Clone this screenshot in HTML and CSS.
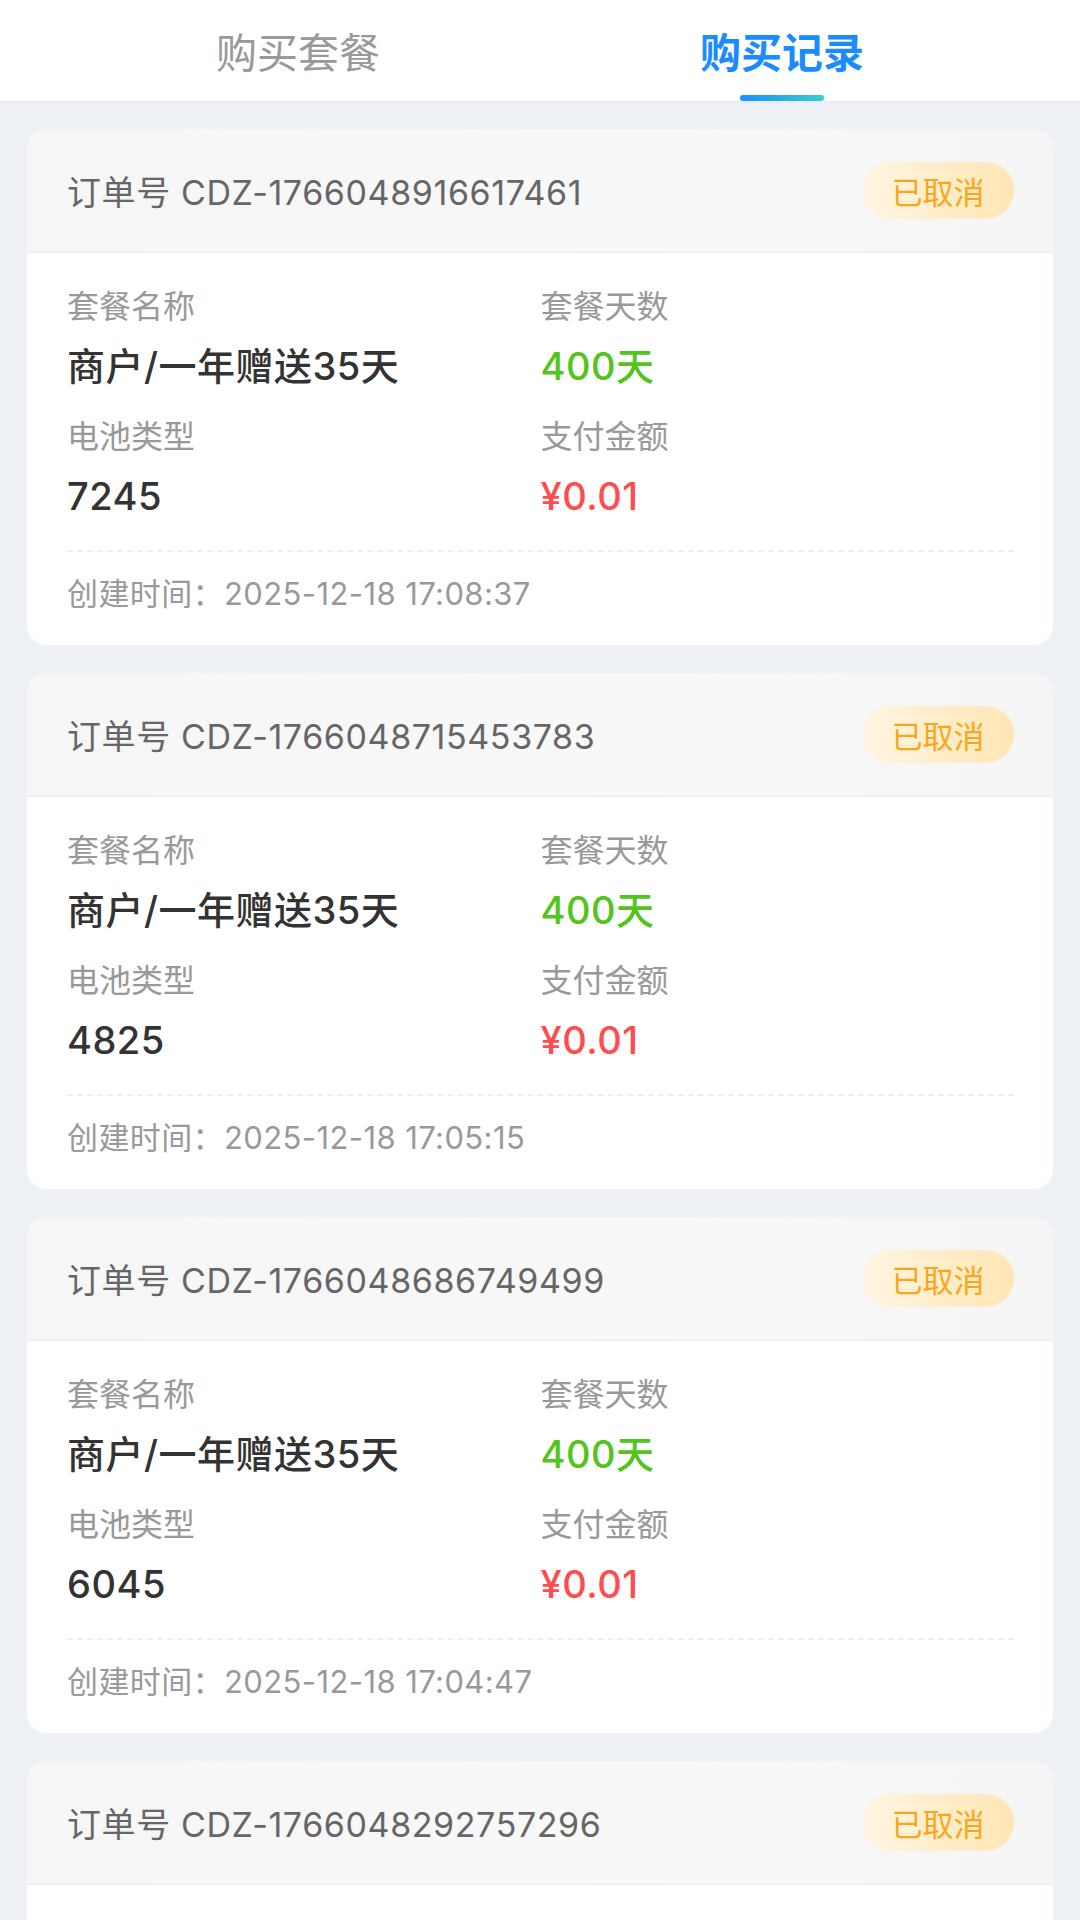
FILE: index.html
```html
<!DOCTYPE html>
<html lang="zh-CN">
<head>
<meta charset="utf-8">
<title>购买记录</title>
<link rel="stylesheet" href="styles.css">
</head>
<body>
<div class="page">
  <nav class="tabs">
    <div class="tab">购买套餐</div>
    <div class="tab active">购买记录</div>
  </nav>
  <main class="list">
    <section class="card">
      <header class="card-head">
        <span class="order-no">订单号 CDZ-1766048916617461</span>
        <span class="badge">已取消</span>
      </header>
      <div class="card-body">
        <div class="grid">
          <div class="item"><span class="label">套餐名称</span><span class="value">商户/一年赠送35天</span></div>
          <div class="item"><span class="label">套餐天数</span><span class="value green">400天</span></div>
          <div class="item"><span class="label">电池类型</span><span class="value">7245</span></div>
          <div class="item"><span class="label">支付金额</span><span class="value red">¥0.01</span></div>
        </div>
        <div class="time">创建时间：2025-12-18 17:08:37</div>
      </div>
    </section>
    <section class="card">
      <header class="card-head">
        <span class="order-no">订单号 CDZ-1766048715453783</span>
        <span class="badge">已取消</span>
      </header>
      <div class="card-body">
        <div class="grid">
          <div class="item"><span class="label">套餐名称</span><span class="value">商户/一年赠送35天</span></div>
          <div class="item"><span class="label">套餐天数</span><span class="value green">400天</span></div>
          <div class="item"><span class="label">电池类型</span><span class="value">4825</span></div>
          <div class="item"><span class="label">支付金额</span><span class="value red">¥0.01</span></div>
        </div>
        <div class="time">创建时间：2025-12-18 17:05:15</div>
      </div>
    </section>
    <section class="card">
      <header class="card-head">
        <span class="order-no">订单号 CDZ-1766048686749499</span>
        <span class="badge">已取消</span>
      </header>
      <div class="card-body">
        <div class="grid">
          <div class="item"><span class="label">套餐名称</span><span class="value">商户/一年赠送35天</span></div>
          <div class="item"><span class="label">套餐天数</span><span class="value green">400天</span></div>
          <div class="item"><span class="label">电池类型</span><span class="value">6045</span></div>
          <div class="item"><span class="label">支付金额</span><span class="value red">¥0.01</span></div>
        </div>
        <div class="time">创建时间：2025-12-18 17:04:47</div>
      </div>
    </section>
    <section class="card">
      <header class="card-head">
        <span class="order-no">订单号 CDZ-1766048292757296</span>
        <span class="badge">已取消</span>
      </header>
      <div class="card-body card-body-empty"></div>
    </section>
  </main>
</div>
</body>
</html>
```
FILE: styles.css
```css
* { box-sizing: border-box; }
html, body {
  margin: 0;
  padding: 0;
  background: #edf0f5;
}
body {
  font-family: Inter, "Noto Sans CJK SC", sans-serif;
  color: #333;
  height: 1920px;
  overflow: hidden;
}
.page {
  display: flex;
  flex-direction: column;
}
.tabs {
  display: flex;
  height: 101px;
  padding: 0 56px;
  background: #fff;
  box-shadow: 0 1px 3px rgba(0, 0, 0, 0.04);
}
.tab {
  flex: 1;
  position: relative;
  display: flex;
  align-items: center;
  justify-content: center;
  padding-bottom: 2px;
  font-family: "Noto Sans CJK SC", sans-serif;
  font-size: 41px;
  color: #999;
}
.tab.active {
  color: #1a8cff;
  font-weight: 700;
}
.tab.active::after {
  content: "";
  position: absolute;
  bottom: 0;
  left: 50%;
  width: 84px;
  height: 6px;
  margin-left: -42px;
  border-radius: 3px;
  background: linear-gradient(90deg, #1890ff, #36cfc9);
}
.list {
  display: flex;
  flex-direction: column;
  gap: 28px;
  padding: 28px 27px 0;
}
.card {
  background: #fff;
  border-radius: 20px;
  overflow: hidden;
  flex-shrink: 0;
}
.card-head {
  display: flex;
  align-items: center;
  justify-content: space-between;
  height: 124px;
  padding: 0 39px 0 40px;
  background: linear-gradient(90deg, #f6f6f7, #f8f8f8 60%, #f5f5f6);
  border-bottom: 1px solid #ececec;
}
.order-no {
  font-size: 34px;
  letter-spacing: 0.6px;
  color: #666;
}
.badge {
  display: flex;
  align-items: center;
  justify-content: center;
  width: 152px;
  height: 57px;
  border-radius: 29px;
  background: linear-gradient(90deg, #fff5e2, #ffe6b5);
  color: #faa61a;
  font-size: 31px;
}
.card-body {
  padding: 32px 39px 0 40px;
}
.card-body-empty {
  height: 390px;
}
.grid {
  display: grid;
  grid-template-columns: 1fr 1fr;
  row-gap: 25px;
  padding-bottom: 30px;
  border-bottom: 2px dashed #eeeeee;
}
.item {
  display: flex;
  flex-direction: column;
  gap: 13px;
}
.label {
  font-size: 32px;
  line-height: 44px;
  color: #999;
}
.value {
  font-size: 38px;
  line-height: 48px;
  font-weight: 500;
  letter-spacing: 0.5px;
  color: #333;
}
.value.green { color: #52c41a; }
.value.red { color: #ff4d4f; }
.time {
  padding: 21px 0 30px;
  font-size: 31px;
  line-height: 42px;
  letter-spacing: 0.4px;
  color: #999;
}
```
